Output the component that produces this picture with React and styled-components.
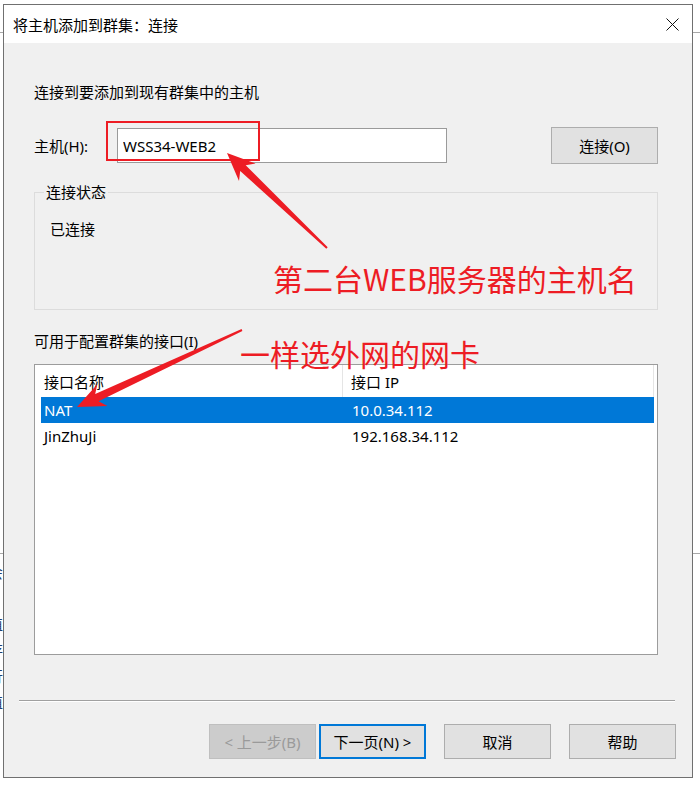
import React from 'react'
import styled, { createGlobalStyle } from 'styled-components'

const UI_FONT = `"Noto Sans", "Noto Sans CJK SC", sans-serif`
const RED = '#ed1c24'

const GlobalStyle = createGlobalStyle`
  html, body {
    margin: 0;
    padding: 0;
    background: #fff;
  }
  body {
    font-family: ${UI_FONT};
  }
`

const Stage = styled.div`
  position: relative;
  width: 700px;
  height: 788px;
  overflow: hidden;
  background: #fff;
`

// pieces of the window that sits behind the dialog
const BackdropLine = styled.div`
  position: absolute;
  left: 0;
  right: 0;
  top: ${p => p.$top}px;
  border-top: 1px solid #a8a8a8;
`

const BackdropColumn = styled.div`
  position: absolute;
  left: -12px;
  top: 559px;
  width: 15px;
  font-size: 15px;
  line-height: 26px;
  color: #1f3f6f;
`

const Window = styled.div`
  position: relative;
  z-index: 1;
  box-sizing: border-box;
  width: 690px;
  height: 774px;
  margin: 4px 0 0 3px;
  border: 1px solid #707070;
  background: #f0f0f0;
  display: flex;
  flex-direction: column;
  font-size: 15px;
  color: #000;
`

const TitleBar = styled.div`
  height: 38px;
  flex: none;
  background: #fff;
  display: flex;
  align-items: center;
  padding-left: 9px;
  font-size: 15px;
`

const CloseButton = styled.div`
  margin-left: auto;
  width: 40px;
  height: 38px;
  display: flex;
  align-items: center;
  justify-content: center;
`

const Body = styled.div`
  flex: 1;
  display: flex;
  flex-direction: column;
  padding: 39px 34px 0 30px;
`

const Text = styled.div`
  line-height: 20px;
  white-space: nowrap;
`

const HostRow = styled.div`
  margin-top: 25px;
  height: 37px;
  display: flex;
  align-items: center;
`

const FieldLabel = styled.div`
  width: 83px;
  line-height: 20px;
`

const TextBox = styled.input`
  box-sizing: border-box;
  width: 330px;
  height: 35px;
  margin: 0;
  padding: 0 5px;
  border: 1px solid #9a9a9a;
  background: #fff;
  font-family: ${UI_FONT};
  font-size: 15px;
  color: #000;
  outline: none;
`

const Button = styled.div`
  box-sizing: border-box;
  width: 107px;
  height: ${p => p.$tall ? 37 : 35}px;
  display: flex;
  align-items: center;
  justify-content: center;
  background: ${p => p.$disabled ? '#cccccc' : '#e1e1e1'};
  border: ${p => p.$default ? '2px solid #0078d7' : `1px solid ${p.$disabled ? '#bfbfbf' : '#adadad'}`};
  color: ${p => p.$disabled ? '#9a9a9a' : '#000'};
  font-size: 15px;
  white-space: nowrap;
`

const ConnectButton = styled(Button)`
  margin-left: auto;
`

const GroupBox = styled.fieldset`
  margin: 18px 0 0;
  padding: 0;
  height: 128px;
  box-sizing: border-box;
  border: 1px solid #dcdcdc;
  min-width: 0;
`

const GroupLegend = styled.legend`
  margin-left: 9px;
  padding: 0 2px;
  font-size: 15px;
  line-height: 20px;
`

const GroupText = styled(Text)`
  margin: 17px 0 0 15px;
`

const SectionLabel = styled(Text)`
  margin-top: 21px;
`

const ListView = styled.div`
  margin-top: 13px;
  height: 291px;
  box-sizing: border-box;
  border: 1px solid #9c9c9c;
  background: #fff;
  padding-right: 3px;
`

const HeaderRow = styled.div`
  height: 32px;
  display: grid;
  grid-template-columns: 308px 1fr;
  border-right: 1px solid #e5e5e5;
`

const HeaderCell = styled.div`
  display: flex;
  align-items: center;
  padding-left: ${p => p.$first ? 9 : 8}px;
  border-right: ${p => p.$first ? '1px solid #e5e5e5' : 'none'};
`

const Row = styled.div`
  margin-left: 6px;
  height: 26px;
  display: grid;
  grid-template-columns: 308px 1fr;
  align-items: center;
  background: ${p => p.$selected ? '#0078d7' : 'transparent'};
  color: ${p => p.$selected ? '#fff' : '#000'};
`

const Cell = styled.div`
  padding-left: 3px;
  white-space: nowrap;
`

const Separator = styled.div`
  margin: 45px -17px 0 -15px;
  border-top: 1px solid #a0a0a0;
  border-bottom: 1px solid #fff;
`

const Footer = styled.div`
  margin: 22px -18px 0 0;
  display: flex;
  justify-content: flex-end;
  gap: 18px;
`

const ButtonPair = styled.div`
  display: flex;
  gap: 3px;
`

// annotations drawn over the screenshot
const HighlightBox = styled.div`
  position: absolute;
  z-index: 2;
  left: 106px;
  top: 121px;
  width: 154px;
  height: 40px;
  box-sizing: border-box;
  border: 2px solid ${RED};
`

const Callout = styled.div`
  position: absolute;
  z-index: 2;
  left: ${p => p.$left}px;
  top: ${p => p.$top}px;
  font-family: "Noto Sans CJK SC", sans-serif;
  font-size: 30px;
  line-height: 30px;
  color: ${RED};
  white-space: nowrap;
`

const ArrowLayer = styled.svg`
  position: absolute;
  z-index: 3;
  left: 0;
  top: 0;
  pointer-events: none;
`

const arrowPoints = ([tx, ty], [hx, hy]) => {
  const dx = hx - tx
  const dy = hy - ty
  const len = Math.hypot(dx, dy)
  const ux = dx / len
  const uy = dy / len
  const nx = -uy
  const ny = ux
  const at = (d, w) => [hx - ux * d + nx * w, hy - uy * d + ny * w]
  return [
    [hx, hy],
    at(28, 12),
    at(22, 4),
    [tx + nx * 1, ty + ny * 1],
    [tx - nx * 1, ty - ny * 1],
    at(22, -4),
    at(28, -12),
  ].map(p => p.map(v => v.toFixed(1)).join(',')).join(' ')
}

const interfaces = [
  { name: 'NAT', ip: '10.0.34.112', selected: true },
  { name: 'JinZhuJi', ip: '192.168.34.112' },
]

const App = () => {
  return (
    <Stage>
      <GlobalStyle />
      <BackdropLine $top={32} />
      <BackdropLine $top={553} />
      <BackdropColumn>
        <div>会</div>
        <div>8</div>
        <div>值</div>
        <div>存</div>
        <div>行</div>
        <div>值</div>
      </BackdropColumn>

      <Window>
        <TitleBar>
          将主机添加到群集：连接
          <CloseButton>
            <svg width="13" height="13" viewBox="0 0 13 13">
              <path d="M0.5 0.5 L12.5 12.5 M12.5 0.5 L0.5 12.5" stroke="#111" strokeWidth="1" fill="none" />
            </svg>
          </CloseButton>
        </TitleBar>

        <Body>
          <Text>连接到要添加到现有群集中的主机</Text>

          <HostRow>
            <FieldLabel>主机(H):</FieldLabel>
            <TextBox readOnly defaultValue="WSS34-WEB2" />
            <ConnectButton $tall>连接(O)</ConnectButton>
          </HostRow>

          <GroupBox>
            <GroupLegend>连接状态</GroupLegend>
            <GroupText>已连接</GroupText>
          </GroupBox>

          <SectionLabel>可用于配置群集的接口(I)</SectionLabel>

          <ListView>
            <HeaderRow>
              <HeaderCell $first>接口名称</HeaderCell>
              <HeaderCell>接口 IP</HeaderCell>
            </HeaderRow>
            {interfaces.map(item => (
              <Row key={item.name} $selected={item.selected}>
                <Cell>{item.name}</Cell>
                <Cell>{item.ip}</Cell>
              </Row>
            ))}
          </ListView>

          <Separator />

          <Footer>
            <ButtonPair>
              <Button $disabled>&lt; 上一步(B)</Button>
              <Button $default>下一页(N) &gt;</Button>
            </ButtonPair>
            <Button>取消</Button>
            <Button>帮助</Button>
          </Footer>
        </Body>
      </Window>

      <HighlightBox />
      <Callout $left={273} $top={263}>第二台WEB服务器的主机名</Callout>
      <Callout $left={240} $top={338}>一样选外网的网卡</Callout>

      <ArrowLayer width="700" height="788" viewBox="0 0 700 788">
        <polygon points={arrowPoints([327, 248], [227, 153])} fill={RED} />
        <polygon points={arrowPoints([242, 330], [77, 407])} fill={RED} />
      </ArrowLayer>
    </Stage>
  )
}

export default App
